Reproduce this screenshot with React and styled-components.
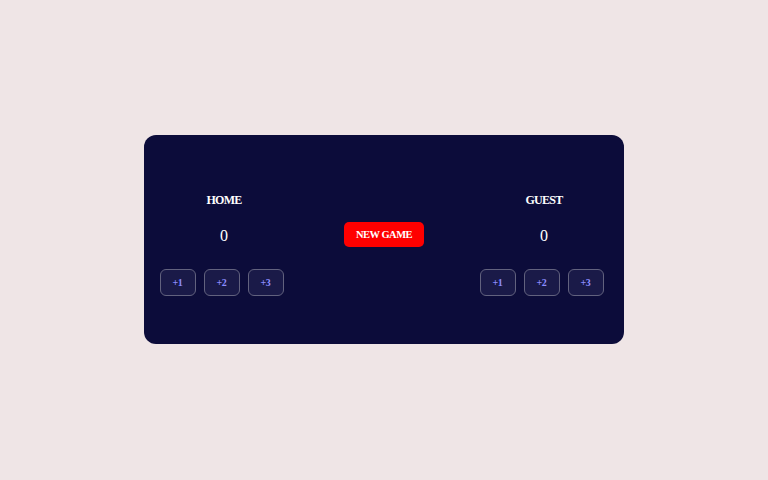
import { useState } from "react";
import styled, { createGlobalStyle } from "styled-components";

const GlobalStyle = createGlobalStyle`
  html, body {
    margin: 0;
    padding: 0;
    background: #efe5e6;
    font-family: "Liberation Serif", "Times New Roman", serif;
  }
`;

const Page = styled.div`
  width: 768px;
  height: 480px;
  display: flex;
  justify-content: center;
  align-items: flex-start;
  padding-top: 135px;
  box-sizing: border-box;
`;

const Board = styled.div`
  width: 480px;
  height: 209px;
  box-sizing: border-box;
  padding-top: 58px;
  background: #0c0c3a;
  border-radius: 12px;
  display: grid;
  grid-template-columns: 160px 160px 160px;
  align-items: start;
`;

const Team = styled.div`
  display: flex;
  flex-direction: column;
  align-items: center;
`;

const Label = styled.h3`
  margin: 0;
  font-size: 12px;
  line-height: 15px;
  font-weight: 700;
  letter-spacing: -0.7px;
  color: #ffffff;
`;

const Score = styled.p`
  margin: 18px 0 0;
  font-size: 16px;
  line-height: 20px;
  color: #ffffff;
`;

const Buttons = styled.div`
  display: flex;
  gap: 8px;
  margin-top: 23px;
  padding-right: 5px;
`;

const AddButton = styled.button`
  width: 36px;
  height: 27px;
  padding: 0;
  border: 1px solid #62627e;
  border-radius: 6px;
  background: #1a1a48;
  color: #8c8cff;
  font-family: inherit;
  font-size: 10px;
  font-weight: 700;
  letter-spacing: -0.3px;
  cursor: pointer;
`;

const Middle = styled.div`
  display: flex;
  justify-content: center;
  padding-top: 29px;
`;

const NewGame = styled.button`
  width: 80px;
  height: 25px;
  padding: 0;
  border: none;
  border-radius: 5px;
  background: #ff0000;
  color: #ffffff;
  font-family: inherit;
  font-size: 10.5px;
  font-weight: 700;
  letter-spacing: -0.5px;
  cursor: pointer;
`;

function TeamPanel({ name, score, onAdd }) {
  return (
    <Team>
      <Label>{name}</Label>
      <Score>{score}</Score>
      <Buttons>
        {[1, 2, 3].map((n) => (
          <AddButton key={n} onClick={() => onAdd(n)}>
            +{n}
          </AddButton>
        ))}
      </Buttons>
    </Team>
  );
}

export default function App() {
  const [home, setHome] = useState(0);
  const [guest, setGuest] = useState(0);

  return (
    <>
      <GlobalStyle />
      <Page>
        <Board>
          <TeamPanel name="HOME" score={home} onAdd={(n) => setHome(home + n)} />
          <Middle>
            <NewGame
              onClick={() => {
                setHome(0);
                setGuest(0);
              }}
            >
              NEW GAME
            </NewGame>
          </Middle>
          <TeamPanel name="GUEST" score={guest} onAdd={(n) => setGuest(guest + n)} />
        </Board>
      </Page>
    </>
  );
}
